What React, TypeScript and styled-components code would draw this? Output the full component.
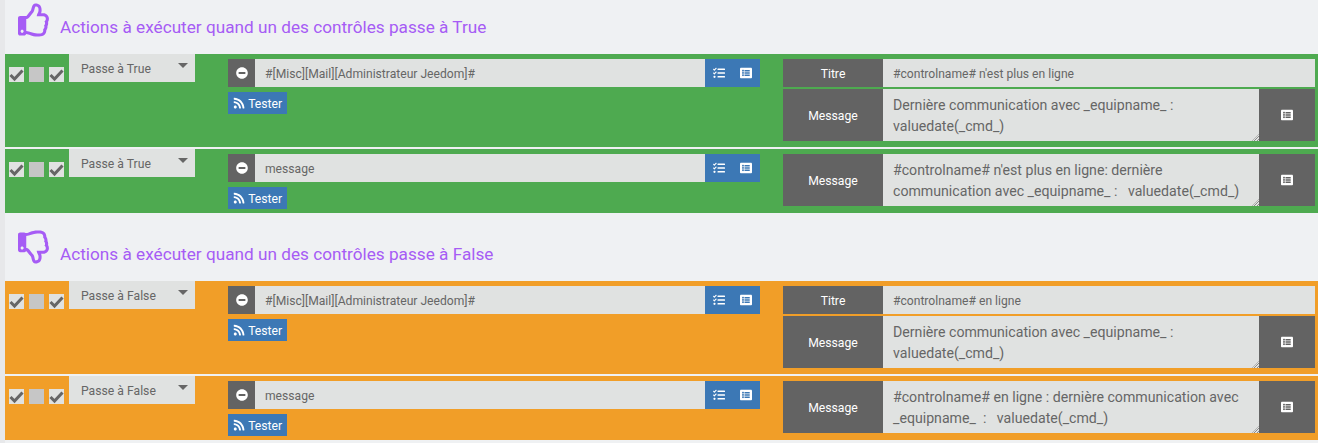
import * as React from 'react'
import styled, { createGlobalStyle } from 'styled-components'
import { FaRegThumbsUp, FaRegThumbsDown, FaMinusCircle, FaRss, FaTasks, FaListAlt } from 'react-icons/fa'

const GlobalStyle = createGlobalStyle`
	html, body {
		margin: 0;
		padding: 0;
		background: #e7e8ea;
		font-family: Roboto, "Liberation Sans", sans-serif;
		overflow: hidden;
	}
	* {
		box-sizing: border-box;
	}
`

const Page = styled.div`
	margin-left: 5px;
	height: 443px;
	background: #eff1f3;
`

const Heading = styled.div<{ $top: number }>`
	display: flex;
	align-items: flex-end;
	gap: 9px;
	padding: ${(p) => p.$top}px 0 17px 13px;
	color: #a65cf5;

	svg {
		width: 33px;
		height: 34px;
		display: block;
	}
`

const HeadingText = styled.span`
	font-size: 17.2px;
	line-height: 20px;
`

const Row = styled.div<{ $color: string }>`
	display: flex;
	align-items: flex-start;
	background: ${(p) => p.$color};
	margin-bottom: 2px;
	padding-left: 4px;
`

const Checks = styled.div`
	display: flex;
	gap: 5px;
	margin-top: 13px;
`

const Check = styled.span<{ $off?: boolean }>`
	display: block;
	width: 15px;
	height: 15px;
	background: ${(p) => (p.$off ? '#c6c6c6' : '#e0e2e1')};

	svg {
		display: block;
	}
`

const Select = styled.div`
	position: relative;
	width: 126px;
	height: 28px;
	margin-left: 5px;
	padding-left: 12px;
	background: #e0e2e1;
	color: #666;
	font-size: 12.2px;
	line-height: 30px;

	&::after {
		content: '';
		position: absolute;
		top: 9px;
		right: 7px;
		border-style: solid;
		border-width: 5px 5px 0 5px;
		border-color: #666 transparent transparent transparent;
	}
`

const Middle = styled.div`
	width: 532px;
	margin-left: 33px;
	padding-top: 5px;
`

const InputGroup = styled.div`
	display: flex;
	height: 28px;
`

const Addon = styled.div`
	display: flex;
	align-items: center;
	justify-content: center;
	width: 27px;
	background: #636363;
	color: #fff;
	font-size: 12px;
`

const Field = styled.div`
	flex: 1;
	padding-left: 10px;
	background: #e0e2e1;
	color: #666;
	font-size: 12.12px;
	line-height: 30px;
	white-space: nowrap;
`

const Tools = styled.div`
	display: flex;
	align-items: center;
	justify-content: space-between;
	width: 55px;
	padding: 0 8px;
	background: #3c78b5;
	color: #fff;
	font-size: 12px;
`

const Tester = styled.button`
	display: flex;
	align-items: center;
	gap: 3px;
	width: 59px;
	height: 22px;
	margin: 5px 0 4px;
	padding: 1px 0 0 5px;
	border: 0;
	background: #3c78b5;
	color: #fff;
	font-family: inherit;
	font-size: 12.2px;
`

const Right = styled.div`
	display: flex;
	flex-direction: column;
	gap: 2px;
	width: 532px;
	margin-left: 23px;
	padding: 5px 0 6px;
`

const Line = styled.div`
	display: flex;
`

const Label = styled.div`
	display: flex;
	align-items: center;
	justify-content: center;
	flex: none;
	width: 100px;
	padding-top: 2px;
	background: #636363;
	color: #fff;
	font-size: 12.2px;
`

const TitleField = styled(Field)`
	height: 28px;
`

const MessageField = styled.div`
	position: relative;
	flex: 1;
	height: 52px;
	padding: 6px 10px 0;
	overflow: hidden;
	background: #e0e2e1;
	color: #666;
	font-size: 14.15px;
	line-height: 21px;
	white-space: pre-wrap;

	/* the textarea's drag grip */
	&::after {
		content: '';
		position: absolute;
		right: 0;
		bottom: 0;
		width: 7px;
		height: 7px;
		background: repeating-linear-gradient(135deg, #8a8a8a 0 1px, transparent 1px 2px);
		clip-path: polygon(100% 0, 100% 100%, 0 100%);
	}
`

const ListButton = styled.div`
	display: flex;
	align-items: center;
	justify-content: center;
	flex: none;
	width: 56px;
	background: #636363;
	color: #fff;
	font-size: 12px;
`

const CheckMark = () => (
	<svg width="15" height="15" viewBox="0 0 15 15">
		<path d="M1.5 8 L5.5 12 L13.5 3.5" fill="none" stroke="#666" strokeWidth="3" />
	</svg>
)

type Action = {
	color: string
	trigger: string
	target: string
	title?: string
	message: string
}

const ActionRow = ({ color, trigger, target, title, message }: Action) => (
	<Row $color={color}>
		<Checks>
			<Check>
				<CheckMark />
			</Check>
			<Check $off />
			<Check>
				<CheckMark />
			</Check>
		</Checks>
		<Select>{trigger}</Select>
		<Middle>
			<InputGroup>
				<Addon>
					<FaMinusCircle />
				</Addon>
				<Field>{target}</Field>
				<Tools>
					<FaTasks />
					<FaListAlt />
				</Tools>
			</InputGroup>
			<Tester>
				<FaRss />
				Tester
			</Tester>
		</Middle>
		<Right>
			{title && (
				<Line>
					<Label>Titre</Label>
					<TitleField>{title}</TitleField>
				</Line>
			)}
			<Line>
				<Label>Message</Label>
				<MessageField>{message}</MessageField>
				<ListButton>
					<FaListAlt />
				</ListButton>
			</Line>
		</Right>
	</Row>
)

const GREEN = '#4eaa50'
const ORANGE = '#f19e28'
const MAIL = '#[Misc][Mail][Administrateur Jeedom]#'

export default function App() {
	return (
		<Page>
			<GlobalStyle />
			<Heading $top={3}>
				<FaRegThumbsUp />
				<HeadingText>Actions à exécuter quand un des contrôles passe à True</HeadingText>
			</Heading>
			<ActionRow
				color={GREEN}
				trigger="Passe à True"
				target={MAIL}
				title="#controlname# n'est plus en ligne"
				message={'Dernière communication avec _equipname_ :\nvaluedate(_cmd_)'}
			/>
			<ActionRow
				color={GREEN}
				trigger="Passe à True"
				target="message"
				message={"#controlname# n'est plus en ligne: dernière\ncommunication avec _equipname_ :   valuedate(_cmd_)"}
			/>
			<Heading $top={15}>
				<FaRegThumbsDown />
				<HeadingText>Actions à exécuter quand un des contrôles passe à False</HeadingText>
			</Heading>
			<ActionRow
				color={ORANGE}
				trigger="Passe à False"
				target={MAIL}
				title="#controlname# en ligne"
				message={'Dernière communication avec _equipname_ :\nvaluedate(_cmd_)'}
			/>
			<ActionRow
				color={ORANGE}
				trigger="Passe à False"
				target="message"
				message={'#controlname# en ligne : dernière communication avec\n_equipname_  :   valuedate(_cmd_)'}
			/>
		</Page>
	)
}
